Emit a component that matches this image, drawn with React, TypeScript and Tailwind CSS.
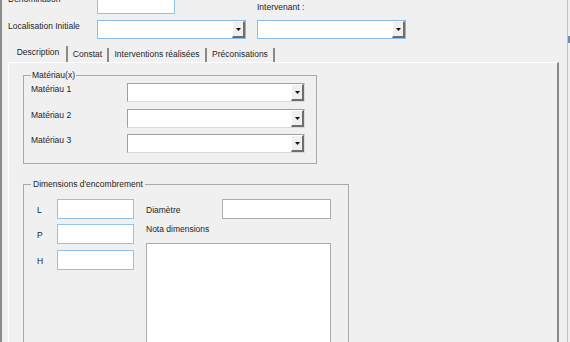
import React from "react";

const Arrow = () => (
  <svg width="5" height="3" viewBox="0 0 5 3">
    <path d="M0 0h5L2.5 3z" fill="#111" />
  </svg>
);

const Combo: React.FC<{ w: string; blue?: boolean }> = ({ w, blue }) => (
  <div
    className={`${w} h-[19px] flex bg-white border ${
      blue
        ? "border-[#88bbe9]"
        : "border-t-[#a0a0a0] border-l-[#a0a0a0] border-r-[#dadada] border-b-[#dadada]"
    }`}
  >
    <div className="flex-1" />
    <div className="w-[13px] flex items-center justify-center bg-[#f0f0f0] border-l border-t border-white border-r-2 border-b-2 border-r-[#6e6e6e] border-b-[#6e6e6e]">
      <Arrow />
    </div>
  </div>
);

const BlueInput: React.FC<{ w: string }> = ({ w }) => (
  <div className={`${w} h-[20px] bg-white border border-[#90c2ee]`} />
);

const Tab: React.FC<{ label: string; w: string; active?: boolean }> = ({
  label,
  w,
  active,
}) => (
  <>
    <div
      className={`${w} text-center ${
        active ? "h-[20px] pt-[5px]" : "h-[17px] pt-[4px]"
      }`}
    >
      {label}
    </div>
    <div
      className={`w-[2px] bg-[#8a8a8a] ${active ? "h-[16px]" : "h-[14px]"}`}
    />
  </>
);

export default function App() {
  return (
    <div className="w-[570px] h-[342px] overflow-hidden bg-[#f0f0f0] flex text-[8.5px] leading-[11px] text-[#1e1e1e] font-['Liberation_Sans',Arial,sans-serif]">
      <div className="w-[2px] shrink-0 bg-[#8c8c8c]" />

      <div className="w-[565px] shrink-0 flex flex-col">
        {/* top fields */}
        <div className="pl-[6px]">
          <div className="flex items-start h-[19px] -mt-[6px]">
            <div className="w-[89px]">Dénomination</div>
            <BlueInput w="w-[78px]" />
            <div className="w-[82px]" />
            <div className="mt-[8px]">Intervenant :</div>
          </div>
          <div className="flex items-start h-[19px] mt-[7px]">
            <div className="w-[89px] pt-[1px]">Localisation Initiale</div>
            <Combo w="w-[149px]" blue />
            <div className="w-[11px]" />
            <Combo w="w-[149px]" blue />
          </div>
        </div>

        {/* tabs */}
        <div className="flex items-end h-[20px] mt-[3px] ml-[8px]">
          <Tab label="Description" w="w-[56px]" active />
          <Tab label="Constat" w="w-[39px]" />
          <Tab label="Interventions réalisées" w="w-[96px]" />
          <Tab label="Préconisations" w="w-[66px]" />
        </div>

        {/* tab page */}
        <div className="ml-[6px] w-[551px] flex-1 border-t border-l border-white border-r-2 border-r-[#8a8a8a] pl-[14px]">
          <fieldset className="mt-[6px] w-[294px] border border-[#a8a8a8] pl-[7px] pt-[2px] pb-[10px]">
            <legend className="px-[1px] leading-[12px]">Matériau(x)</legend>
            <div className="flex h-[19px]">
              <div className="w-[96px] pt-[1px]">Matériau 1</div>
              <Combo w="w-[178px]" />
            </div>
            <div className="flex h-[19px] mt-[7px]">
              <div className="w-[96px] pt-[1px]">Matériau 2</div>
              <Combo w="w-[178px]" />
            </div>
            <div className="flex h-[19px] mt-[6px]">
              <div className="w-[96px] pt-[1px]">Matériau 3</div>
              <Combo w="w-[178px]" />
            </div>
          </fieldset>

          <fieldset className="mt-[14px] w-[326px] border border-[#a8a8a8] pl-[7px] pt-[9px] pb-[20px]">
            <legend className="px-[2px] leading-[12px]">
              Dimensions d'encombrement
            </legend>
            <div className="flex">
              <div className="pl-[6px] flex flex-col">
                <div className="flex h-[20px]">
                  <div className="w-[20px] pt-[6px]">L</div>
                  <BlueInput w="w-[77px]" />
                </div>
                <div className="flex h-[20px] mt-[5px]">
                  <div className="w-[20px] pt-[6px]">P</div>
                  <BlueInput w="w-[77px]" />
                </div>
                <div className="flex h-[20px] mt-[6px]">
                  <div className="w-[20px] pt-[6px]">H</div>
                  <BlueInput w="w-[77px]" />
                </div>
              </div>
              <div className="ml-[12px] flex flex-col">
                <div className="flex h-[20px]">
                  <div className="w-[76px] pt-[6px]">Diamètre</div>
                  <div className="w-[109px] h-[20px] bg-white border border-[#acacac]" />
                </div>
                <div className="mt-[5px]">Nota dimensions</div>
                <div className="mt-[8px] w-[185px] h-[120px] bg-white border border-[#acacac]" />
              </div>
            </div>
          </fieldset>
        </div>
      </div>

      <div className="w-[1px] shrink-0 bg-[#c4c4c4]" />
      <div className="w-[2px] shrink-0 flex flex-col">
        <div className="mt-[36px] h-[7px] bg-[#6f8bb0]" />
      </div>
    </div>
  );
}
